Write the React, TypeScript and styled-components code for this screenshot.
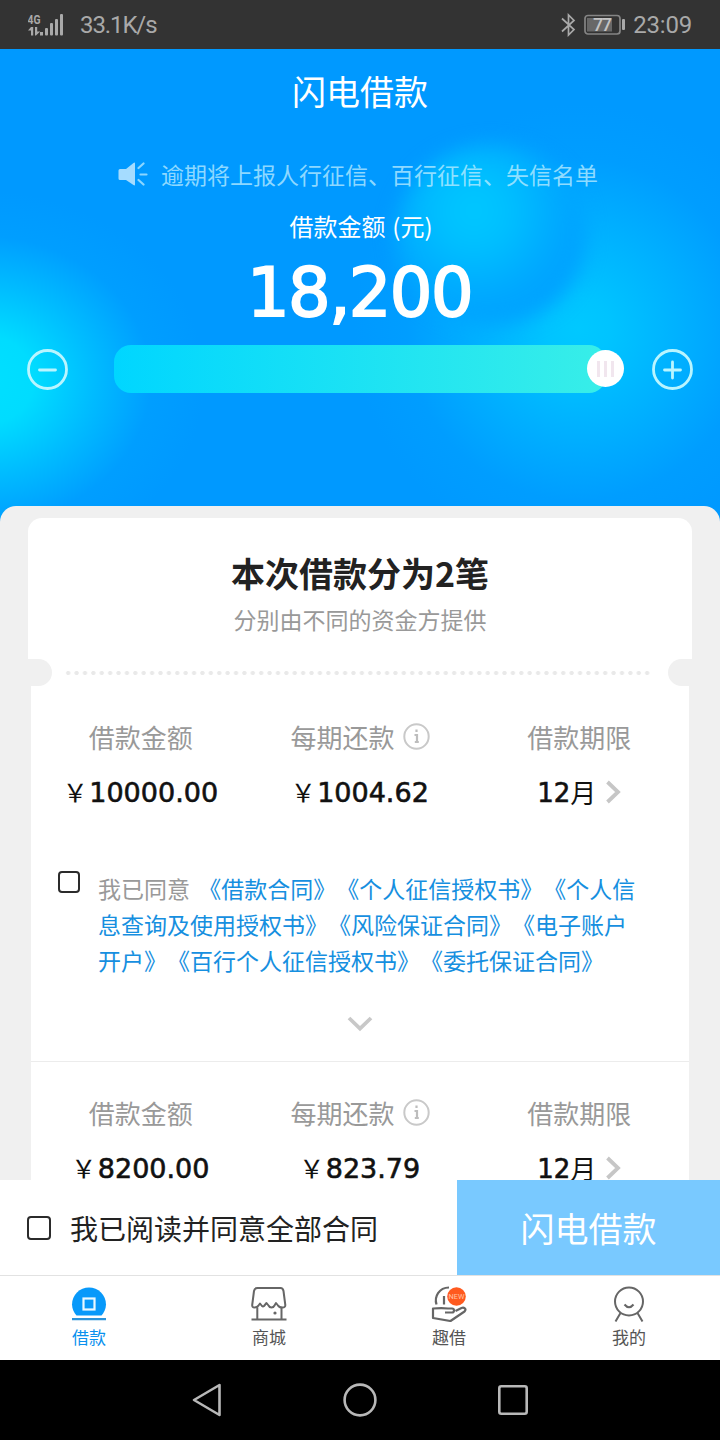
import React from "react";
import styled, { createGlobalStyle } from "styled-components";

const GlobalStyle = createGlobalStyle`
  * { box-sizing: border-box; }
  html, body { margin: 0; padding: 0; }
  body {
    width: 720px;
    height: 1440px;
    overflow: hidden;
    background: #000;
    font-family: "Noto Sans CJK SC", sans-serif;
    text-spacing-trim: space-all;
  }
  svg { display: block; flex: none; }
`;

const Screen = styled.div`
  width: 720px;
  height: 1440px;
  display: flex;
  flex-direction: column;
  overflow: hidden;
`;

const StatusBar = styled.header`
  height: 49px;
  flex: none;
  display: flex;
  align-items: center;
  justify-content: space-between;
  padding: 0 28px;
  background: #333;
  color: #a9a9a9;
  font-family: Roboto, sans-serif;
  font-size: 24px;
  line-height: 48px;
`;

const StatusGroup = styled.div<{ $gap: number }>`
  display: flex;
  align-items: center;
  gap: ${(p) => p.$gap}px;
`;

const Speed = styled.span`
  letter-spacing: -1.1px;
`;

const Clock = styled.span`
  letter-spacing: -0.2px;
`;

const Hero = styled.section`
  position: relative;
  z-index: 0;
  height: 477px;
  flex: none;
  display: flex;
  flex-direction: column;
  align-items: center;
  color: #fff;
  background:
    radial-gradient(ellipse 225px 190px at -20px 331px, #00e0ff 0%, #00dcff 24%, rgba(0, 200, 255, 0.75) 50%, rgba(0, 170, 255, 0.3) 76%, rgba(0, 153, 255, 0) 100%),
    radial-gradient(circle 225px at 578px 280px, #00c8ff 0%, #00c4ff 14%, rgba(0, 184, 255, 0.75) 46%, rgba(0, 165, 255, 0.35) 76%, rgba(0, 153, 255, 0) 100%),
    #0099ff;

  &::before {
    content: "";
    position: absolute;
    z-index: -1;
    left: 396px;
    top: 96px;
    width: 190px;
    height: 180px;
    border-radius: 50%;
    filter: blur(10px);
    background: radial-gradient(circle 130px at 78px 66px, #00c8ff 0%, #00bfff 28%, #00a9ff 65%, #009cff 100%);
  }
`;

const PageTitle = styled.h1`
  margin: 0;
  height: 86px;
  font-size: 34px;
  line-height: 84px;
  font-weight: 400;
`;

const Notice = styled.div`
  margin-top: 20px;
  height: 38px;
  display: flex;
  align-items: center;
  gap: 13px;
  padding-right: 4px;
  font-size: 23px;
  line-height: 38px;
  color: rgba(190, 238, 255, 0.75);
`;

const AmountLabel = styled.div`
  margin-top: 17px;
  padding-left: 2px;
  word-spacing: 1.5px;
  font-size: 24px;
  line-height: 32px;
`;

const Amount = styled.div`
  margin-top: 15px;
  height: 72px;
  font-family: "DejaVu Sans", sans-serif;
  font-size: 67px;
  line-height: 72px;
  letter-spacing: -1.6px;
  padding-right: 1px;
  -webkit-text-stroke: 2px #fff;
`;

const SliderRow = styled.div`
  align-self: stretch;
  margin-top: 16px;
  padding: 0 27px;
  height: 48px;
  display: flex;
  align-items: center;
`;

const RoundButton = styled.button`
  width: 41px;
  height: 41px;
  padding: 0;
  border: 0;
  background: none;
`;

const Track = styled.div`
  position: relative;
  width: 492px;
  height: 48px;
  margin: 0 auto 0 46px;
  border-radius: 17px;
  background: linear-gradient(90deg, #00d6ff, #38eee8);
`;

const Thumb = styled.div`
  position: absolute;
  right: -18px;
  top: 5px;
  width: 37px;
  height: 37px;
  border-radius: 50%;
  background: #fff;
  display: flex;
  align-items: center;
  justify-content: center;
  gap: 4px;
`;

const Grip = styled.i`
  width: 3px;
  height: 16px;
  background: #f1e6ee;
`;

const Sheet = styled.main`
  position: relative;
  z-index: 1;
  margin-top: -20px;
  flex: 1;
  min-height: 0;
  overflow: hidden;
  padding: 12px 28px 0;
  border-radius: 16px 16px 0 0;
  background: #f0f0f0;
`;

const TicketHead = styled.div`
  height: 141px;
  padding-top: 31px;
  border-radius: 14px 14px 0 0;
  background: #fff;
  text-align: center;
`;

const TicketTitle = styled.h2`
  margin: 0;
  font-size: 34px;
  line-height: 48px;
  font-weight: 700;
  color: #222;
`;

const TicketNote = styled.p`
  margin: 6px 0 0;
  font-size: 23px;
  line-height: 32px;
  color: #999;
`;

const Perforation = styled.div`
  height: 27px;
  display: flex;
  align-items: center;
  justify-content: space-between;
  background: #fff;
`;

const Notch = styled.span<{ $side: "left" | "right" }>`
  width: 24px;
  height: 27px;
  background: #f0f0f0;
  border-radius: ${(p) => (p.$side === "left" ? "0 13.5px 13.5px 0" : "13.5px 0 0 13.5px")};
`;

const Dots = styled.span`
  width: 588px;
  height: 6px;
  margin-right: 4px;
  background: radial-gradient(circle at 50% 50%, #e9e9e9 1.7px, rgba(233, 233, 233, 0) 2.5px) 0 0 / 8.4px 6px;
`;

const TicketBody = styled.div`
  margin: 0 3px;
  height: 600px;
  background: #fff;
`;

const Loan = styled.section`
  border-bottom: 1px solid #ececec;
  height: 376px;
`;

const Columns = styled.div`
  display: grid;
  grid-template-columns: repeat(3, 1fr);
  padding-top: 33px;
`;

const Column = styled.div`
  display: flex;
  flex-direction: column;
  align-items: center;
`;

const ColumnLabel = styled.div`
  display: flex;
  align-items: center;
  gap: 8px;
  height: 36px;
  font-size: 26px;
  line-height: 36px;
  color: #999;

  svg { margin-top: -1px; }
`;

const ColumnValue = styled.div`
  display: flex;
  align-items: center;
  margin-top: 19px;
  height: 36px;
  color: #111;
  font-size: 26px;
  line-height: 34px;
`;

const Yen = styled.span`
  width: 26px;
  margin-top: -2px;
  font-size: 25px;
  text-align: center;
  text-indent: -2px;
`;

const Digits = styled.span<{ $size: number }>`
  margin-top: 1px;
  font-family: "DejaVu Sans", sans-serif;
  font-size: ${(p) => p.$size}px;
  -webkit-text-stroke: 0.6px #111;
`;

const Term = styled.span`
  margin-right: 10px;
`;

const Agreement = styled.div`
  display: flex;
  align-items: flex-start;
  padding: 61px 0 0 27px;
  gap: 18px;
`;

const Checkbox = styled.span<{ $size: number }>`
  flex: none;
  width: ${(p) => p.$size}px;
  height: ${(p) => p.$size}px;
  border: 2px solid #2b2b2b;
  border-radius: 4px;
  background: #fff;
`;

const AgreementText = styled.p`
  margin: -1px 0 0;
  font-size: 23px;
  line-height: 36px;
  color: #999;
  white-space: nowrap;
`;

const Agreed = styled.span`
  margin-right: 3px;
`;

const DocLink = styled.span`
  color: #168fe0;
`;

const Expand = styled.div`
  display: flex;
  justify-content: center;
  margin-top: 38px;
`;

const ActionBar = styled.div`
  position: relative;
  z-index: 2;
  height: 95px;
  flex: none;
  display: flex;
  background: #fff;
`;

const ConfirmAll = styled.label`
  width: 457px;
  display: flex;
  align-items: center;
  gap: 19px;
  padding: 0 0 0 27px;
  font-size: 28px;
  line-height: 94px;
  color: #222;
`;

const ApplyButton = styled.button`
  flex: 1;
  padding: 0 0 1px;
  border: 0;
  background: #79c9ff;
  color: #fff;
  font-family: inherit;
  font-size: 34px;
`;

const TabBar = styled.nav`
  height: 85px;
  flex: none;
  display: grid;
  grid-template-columns: repeat(4, 1fr);
  border-top: 1px solid #e2e2e2;
  background: #fff;
`;

const Tab = styled.div<{ $active?: boolean }>`
  display: flex;
  flex-direction: column;
  align-items: center;
  padding: 10px 2px 0 0;
  font-size: 17px;
  line-height: 24px;
  color: ${(p) => (p.$active ? "#0a91ee" : "#555")};

  svg { margin-bottom: 3px; }
`;

const SystemNav = styled.footer`
  height: 80px;
  flex: none;
  display: flex;
  align-items: center;
  justify-content: center;
  gap: 121px;
  padding-right: 1px;
  background: #000;
`;

const SignalIcon = () => (
  <svg width="36" height="24" viewBox="0 0 36 24" fill="#a9a9a9">
    <text x="-0.5" y="10.500" fontSize="12" fontWeight="700" textLength="13" lengthAdjust="spacingAndGlyphs" fontFamily="Roboto, sans-serif">4G</text>
    <path d="M3 14h2.200v8.500H3v-5H0zM7 14h2.200v4.500h3L8 22.500H7z" />
    <rect x="12" y="19" width="3" height="3.500" />
    <rect x="17" y="15" width="3" height="7.500" rx="1" />
    <rect x="22" y="10" width="3" height="12.500" rx="1" />
    <rect x="27" y="6" width="3" height="16.500" rx="1" />
    <rect x="32" y="1" width="3" height="21.500" rx="1" />
  </svg>
);

const BluetoothIcon = () => (
  <svg width="15" height="24" viewBox="0 0 15 24" fill="none" stroke="#a9a9a9" strokeWidth="1.700">
    <path d="M1 5.500l12 11-5.500 5.500V2L13 7.500 1 18.500" />
  </svg>
);

const BatteryIcon = () => (
  <svg width="41" height="22" viewBox="0 0 41 22">
    <rect x="1" y="1.500" width="35" height="18.500" rx="3" fill="none" stroke="#858585" strokeWidth="1.700" />
    <rect x="3" y="4" width="25" height="13.500" fill="#686868" />
    <rect x="38" y="5" width="3" height="11" rx="1" fill="#a9a9a9" />
    <text x="9" y="17" fontSize="18" fontWeight="500" fill="#c4c4c4" textLength="19" fontFamily="Roboto, sans-serif">77</text>
  </svg>
);

const SpeakerIcon = () => (
  <svg width="30" height="24" viewBox="0 0 30 24">
    <path d="M2 7h6l7.500-6q1.500-1 1.500.5v21q0 1.500-1.500.5L8 18H2q-1.500 0-1.500-1.500v-8Q.5 7 2 7z" fill="#a5dcff" />
    <path d="M20.500 6l5-4.500M22.500 12.500h6M20.500 18l5 4.500" stroke="#8bd6ff" strokeWidth="2.200" strokeLinecap="round" />
  </svg>
);

const StepIcon = ({ plus }: { plus?: boolean }) => (
  <svg width="41" height="41" viewBox="0 0 41 41" fill="none" stroke="#b9f5ff" strokeWidth="2.800" strokeLinecap="round">
    <circle cx="20.500" cy="20.500" r="19" />
    <path d={plus ? "M12.500 21h16M20.500 13v16" : "M12.500 21h16"} />
  </svg>
);

const InfoIcon = () => (
  <svg width="27" height="27" viewBox="0 0 27 27" fill="none" stroke="#c9c9c9" strokeWidth="2">
    <circle cx="13.500" cy="13.500" r="12.200" />
    <path d="M13.500 6.500v2.500M11.500 12h2.500v7M11.800 19h4" stroke="#bdbdbd" strokeWidth="2.200" />
  </svg>
);

const ChevronRight = () => (
  <svg width="15" height="24" viewBox="0 0 15 24" fill="none" stroke="#c6c6c6" strokeWidth="3.800">
    <path d="M1.500 2l10.500 10-10.500 10" />
  </svg>
);

const ChevronDown = () => (
  <svg width="26" height="16" viewBox="0 0 26 16" fill="none" stroke="#c8c8c8" strokeWidth="3.800">
    <path d="M2 2l11 10.500L24 2" />
  </svg>
);

const LoanIcon = () => (
  <svg width="36" height="36" viewBox="0 0 36 36">
    <path d="M5.500 29.500C3 27 1 22.500 1 18.500a17 17 0 0 1 34 0c0 4-2 8.500-4.500 11z" fill="#0899fa" />
    <rect x="12.500" y="12.500" width="11" height="11" fill="none" stroke="#e9f8ff" strokeWidth="2.200" />
    <path d="M1 33.200h34" stroke="#2b93d9" strokeWidth="2.200" />
  </svg>
);

const ShopIcon = () => (
  <svg width="36" height="36" viewBox="0 0 36 36" fill="none" stroke="#666" strokeWidth="2">
    <path d="M6.500 2h23q2.500 0 3 3l1.800 14q.2 2.500-2.800 2.500-3.500 0-4.500-2l-2-2.500-1.500 2.500q-1 2-3 2t-3-2L15.500 17 13 20q-1 1-2 0l-2-2.500-1.500 2q-1 2-4 2-2.500 0-2.300-2.500L3 5q.5-3 3.500-3z" strokeLinejoin="round" />
    <path d="M6.300 21.500v11.500M30.500 21.500v11.500M.5 33.500h35" />
    <circle cx="24" cy="27" r="1.600" fill="#666" stroke="none" />
  </svg>
);

const GiveIcon = () => (
  <svg width="36" height="36" viewBox="0 0 36 36" fill="none" stroke="#666" strokeWidth="2.200">
    <path d="M5.500 18.500C3 11 8 1.500 18 1.500M13 10v8.500" />
    <path d="M14 26.500h7q2 0 2-2t-2-2h-4q-6-.8-15 0V32l17.500 3L33.500 25.500q1.800-2 .3-3.200t-3.300-.3L24.500 25" strokeLinejoin="round" />
    <circle cx="25.500" cy="10.500" r="9.300" fill="#ff5a1f" stroke="none" />
    <text x="17.500" y="13" fontSize="7.500" textLength="16" lengthAdjust="spacingAndGlyphs" fill="#ffc5a5" stroke="none" fontFamily="Roboto, sans-serif">NEW</text>
  </svg>
);

const ProfileIcon = () => (
  <svg width="36" height="36" viewBox="0 0 36 36" fill="none" stroke="#666" strokeWidth="2">
    <circle cx="18" cy="15.500" r="14" />
    <path d="M13.500 18.500q4.500 5.500 9 0M9.500 27L4.500 35.500M26.500 27l5 8.500" />
  </svg>
);

const BackIcon = () => (
  <svg width="30" height="34" viewBox="0 0 30 34" fill="none" stroke="#b8b8b8" strokeWidth="2.600" strokeLinejoin="round">
    <path d="M2 17L27.500 2v30z" />
  </svg>
);

const HomeIcon = () => (
  <svg width="34" height="34" viewBox="0 0 34 34" fill="none" stroke="#b8b8b8" strokeWidth="2.600">
    <circle cx="17" cy="17" r="15.400" />
  </svg>
);

const RecentIcon = () => (
  <svg width="30" height="30" viewBox="0 0 30 30" fill="none" stroke="#b8b8b8" strokeWidth="2.600">
    <rect x="1.300" y="1.300" width="27.400" height="27.400" rx="2" />
  </svg>
);

const LoanColumns = ({ amount, monthly }: { amount: string; monthly: string }) => (
  <Columns>
    <Column>
      <ColumnLabel>借款金额</ColumnLabel>
      <ColumnValue><Yen>￥</Yen><Digits $size={27}>{amount}</Digits></ColumnValue>
    </Column>
    <Column>
      <ColumnLabel>每期还款<InfoIcon /></ColumnLabel>
      <ColumnValue><Yen>￥</Yen><Digits $size={27}>{monthly}</Digits></ColumnValue>
    </Column>
    <Column>
      <ColumnLabel>借款期限</ColumnLabel>
      <ColumnValue><Digits $size={26}>12</Digits><Term>月</Term><ChevronRight /></ColumnValue>
    </Column>
  </Columns>
);

export default function App() {
  return (
    <>
      <GlobalStyle />
      <Screen>
        <StatusBar>
          <StatusGroup $gap={16}>
            <SignalIcon />
            <Speed>33.1K/s</Speed>
          </StatusGroup>
          <StatusGroup $gap={8}>
            <BluetoothIcon />
            <BatteryIcon />
            <Clock>23:09</Clock>
          </StatusGroup>
        </StatusBar>

        <Hero>
          <PageTitle>闪电借款</PageTitle>
          <Notice><SpeakerIcon />逾期将上报人行征信、百行征信、失信名单</Notice>
          <AmountLabel>借款金额 (元)</AmountLabel>
          <Amount>18,200</Amount>
          <SliderRow>
            <RoundButton><StepIcon /></RoundButton>
            <Track>
              <Thumb><Grip /><Grip /><Grip /></Thumb>
            </Track>
            <RoundButton><StepIcon plus /></RoundButton>
          </SliderRow>
        </Hero>

        <Sheet>
          <TicketHead>
            <TicketTitle>本次借款分为2笔</TicketTitle>
            <TicketNote>分别由不同的资金方提供</TicketNote>
          </TicketHead>
          <Perforation>
            <Notch $side="left" />
            <Dots />
            <Notch $side="right" />
          </Perforation>
          <TicketBody>
            <Loan>
              <LoanColumns amount="10000.00" monthly="1004.62" />
              <Agreement>
                <Checkbox $size={22} />
                <AgreementText>
                  <Agreed>我已同意</Agreed> <DocLink>《借款合同》《个人征信授权书》《个人信<br />
                  息查询及使用授权书》《风险保证合同》《电子账户<br />
                  开户》《百行个人征信授权书》《委托保证合同》</DocLink>
                </AgreementText>
              </Agreement>
              <Expand><ChevronDown /></Expand>
            </Loan>
            <LoanColumns amount="8200.00" monthly="823.79" />
          </TicketBody>
        </Sheet>

        <ActionBar>
          <ConfirmAll><Checkbox $size={24} />我已阅读并同意全部合同</ConfirmAll>
          <ApplyButton>闪电借款</ApplyButton>
        </ActionBar>

        <TabBar>
          <Tab $active><LoanIcon />借款</Tab>
          <Tab><ShopIcon />商城</Tab>
          <Tab><GiveIcon />趣借</Tab>
          <Tab><ProfileIcon />我的</Tab>
        </TabBar>

        <SystemNav>
          <BackIcon />
          <HomeIcon />
          <RecentIcon />
        </SystemNav>
      </Screen>
    </>
  );
}
